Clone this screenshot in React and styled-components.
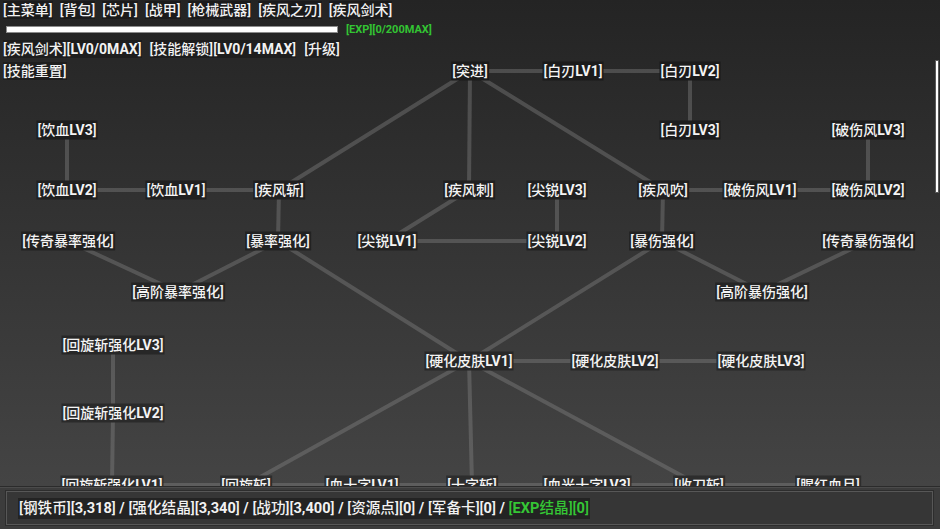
import React from 'react';
import styled, { createGlobalStyle } from 'styled-components';

const GlobalStyle = createGlobalStyle`
  html, body {
    margin: 0;
    padding: 0;
    background: #242424;
  }
  body {
    font-family: Roboto, "Noto Sans CJK SC", sans-serif;
    overflow: hidden;
  }
`;

// background runs from TOP to BOTTOM grey, labels are a darker cut of it
const TOP = 0x24;
const BOTTOM = 0x47;
const H = 529;

const shadeAt = (y) => {
  const v = Math.round((TOP + (BOTTOM - TOP) * (y / H)) * 0.66);
  return `rgb(${v},${v},${v})`;
};

const Page = styled.div`
  position: relative;
  width: 940px;
  height: ${H}px;
  overflow: hidden;
  display: flex;
  flex-direction: column;
  background: linear-gradient(180deg, #242424 0%, #474747 100%);
  color: #f2f2f2;
  font-size: 14px;
  font-weight: 500;
`;

const Canvas = styled.div`
  position: absolute;
  inset: 0;
  z-index: 1;
`;

const Wires = styled.svg`
  position: absolute;
  inset: 0;
  width: 100%;
  height: 100%;

  line {
    stroke: rgba(140, 140, 140, 0.36);
    stroke-width: 4;
  }
`;

const NodeLabel = styled.div.attrs(p => ({
  style: { left: p.$x, top: p.$y, background: shadeAt(p.$y) },
}))`
  position: absolute;
  transform: translate(-50%, -50%);
  padding: 0 1px;
  line-height: 19px;
  white-space: nowrap;
  color: #f4f4f4;
`;

const Header = styled.div`
  position: relative;
  z-index: 2;
  display: flex;
  flex-direction: column;
  width: max-content;
  padding-left: 3px;
`;

const Row = styled.div`
  display: flex;
  align-items: center;
  gap: ${p => p.$gap ?? 7}px;
  height: ${p => p.$h ?? 20}px;
  margin-top: ${p => p.$mt ?? 0}px;
`;

const Tag = styled.span`
  line-height: 18px;
  white-space: nowrap;
  background: rgba(0, 0, 0, 0.25);
`;

const ExpBar = styled.div`
  width: 330px;
  height: 5px;
  margin-left: 3px;
  background: #ffffff;
  border: 1px solid #8c8c8c;
`;

const ExpText = styled.span`
  font-size: 11px;
  font-weight: 700;
  color: #33c433;
`;

const Bold = styled.b`
  font-weight: 700;
`;

const Spacer = styled.div`
  flex: 1;
`;

const Footer = styled.div`
  position: relative;
  z-index: 3;
  height: 43px;
  box-sizing: border-box;
  padding: 4px 7px 4px 6px;
  background: #3c3c3c;
  border-top: 1px solid #2b2b2b;
  box-shadow: inset 0 1px 0 #4b4b4b;
`;

const FooterBox = styled.div`
  height: 100%;
  box-sizing: border-box;
  display: flex;
  align-items: center;
  padding-left: 11px;
  background: #363636;
  border: 1px solid #575757;
  outline: 1px solid #2d2d2d;
`;

const FooterText = styled.span`
  font-size: 14.6px;
  line-height: 21px;
  padding: 0 1px;
  background: #232323;
  white-space: nowrap;
`;

const Green = styled.span`
  color: #35c635;
`;

const ScrollThumb = styled.div`
  position: absolute;
  z-index: 4;
  right: 1px;
  top: 60px;
  width: 2px;
  height: 131px;
  background: #ffffff;
  border: 1px solid #5a5a5a;
`;

const rich = (text) =>
  text.split(/([A-Za-z0-9,/]+)/).map((part, i) =>
    i % 2 ? <Bold key={i}>{part}</Bold> : part
  );

const nodes = {
  tj: ['突进', 470, 71],
  br1: ['白刃LV1', 573, 71],
  br2: ['白刃LV2', 690, 71],
  br3: ['白刃LV3', 690, 130],
  psf3: ['破伤风LV3', 868, 130],
  yx3: ['饮血LV3', 67, 130],
  yx2: ['饮血LV2', 67, 190],
  yx1: ['饮血LV1', 176, 190],
  jfz: ['疾风斩', 279, 190],
  jfc: ['疾风刺', 469, 190],
  jr3: ['尖锐LV3', 557, 190],
  jfch: ['疾风吹', 663, 190],
  psf1: ['破伤风LV1', 760, 190],
  psf2: ['破伤风LV2', 868, 190],
  cqbl: ['传奇暴率强化', 68, 241],
  bl: ['暴率强化', 278, 241],
  jr1: ['尖锐LV1', 387, 241],
  jr2: ['尖锐LV2', 557, 241],
  bs: ['暴伤强化', 662, 241],
  cqbs: ['传奇暴伤强化', 868, 241],
  gjbl: ['高阶暴率强化', 178, 292],
  gjbs: ['高阶暴伤强化', 762, 292],
  hx3: ['回旋斩强化LV3', 113, 345],
  yh1: ['硬化皮肤LV1', 469, 361],
  yh2: ['硬化皮肤LV2', 615, 361],
  yh3: ['硬化皮肤LV3', 761, 361],
  hx2: ['回旋斩强化LV2', 113, 413],
  hx1: ['回旋斩强化LV1', 112, 485],
  hxz: ['回旋斩', 246, 485],
  xsz1: ['血十字LV1', 362, 485],
  szz: ['十字斩', 472, 485],
  xgsz: ['血光十字LV3', 587, 485],
  sdz: ['收刀斩', 699, 485],
  xhxy: ['腥红血月', 828, 485],
};

const edges = [
  ['tj', 'br1'], ['br1', 'br2'], ['br2', 'br3'], ['psf3', 'psf2'],
  ['tj', 'jfz'], ['tj', 'jfc'], ['tj', 'jfch'],
  ['yx3', 'yx2'], ['yx2', 'yx1'], ['yx1', 'jfz'],
  ['jfch', 'psf1'], ['psf1', 'psf2'],
  ['jfz', 'bl'], ['jfc', 'jr1'], ['jr3', 'jr2'], ['jr1', 'jr2'], ['jfch', 'bs'],
  ['cqbl', 'gjbl'], ['bl', 'gjbl'], ['bl', 'yh1'], ['bs', 'yh1'],
  ['bs', 'gjbs'], ['cqbs', 'gjbs'],
  ['yh1', 'yh2'], ['yh2', 'yh3'],
  ['hx3', 'hx2'], ['hx2', 'hx1'],
  ['yh1', 'hxz'], ['yh1', 'szz'], ['yh1', 'sdz'],
  ['hx1', 'hxz'], ['hxz', 'xsz1'], ['xsz1', 'szz'], ['szz', 'xgsz'],
  ['xgsz', 'sdz'], ['sdz', 'xhxy'],
];

const menu = ['主菜单', '背包', '芯片', '战甲', '枪械武器', '疾风之刃', '疾风剑术'];

const SkillTree = () => (
  <Canvas>
    <Wires viewBox={`0 0 940 ${H}`}>
      {edges.map(([a, b]) => (
        <line
          key={a + b}
          x1={nodes[a][1]}
          y1={nodes[a][2]}
          x2={nodes[b][1]}
          y2={nodes[b][2]}
        />
      ))}
    </Wires>
    {Object.entries(nodes).map(([id, [name, x, y]]) => (
      <NodeLabel key={id} $x={x} $y={y}>
        [{rich(name)}]
      </NodeLabel>
    ))}
  </Canvas>
);

export default function App() {
  return (
    <Page>
      <GlobalStyle />
      <SkillTree />
      <Header>
        <Row>
          {menu.map(m => (
            <Tag key={m}>[{m}]</Tag>
          ))}
        </Row>
        <Row $h={19} $gap={8}>
          <ExpBar />
          <ExpText>[EXP][0/200MAX]</ExpText>
        </Row>
        <Row $gap={8}>
          <Tag>[疾风剑术]{rich('[LV0/0MAX]')}</Tag>
          <Tag>[技能解锁]{rich('[LV0/14MAX]')}</Tag>
          <Tag>[升级]</Tag>
        </Row>
        <Row $mt={2}>
          <Tag>[技能重置]</Tag>
        </Row>
      </Header>
      <Spacer />
      <Footer>
        <FooterBox>
          <FooterText>
            {rich('[钢铁币][3,318] / [强化结晶][3,340] / [战功][3,400] / [资源点][0] / [军备卡][0] / ')}
            <Green>{rich('[EXP结晶][0]')}</Green>
          </FooterText>
        </FooterBox>
      </Footer>
      <ScrollThumb />
    </Page>
  );
}
